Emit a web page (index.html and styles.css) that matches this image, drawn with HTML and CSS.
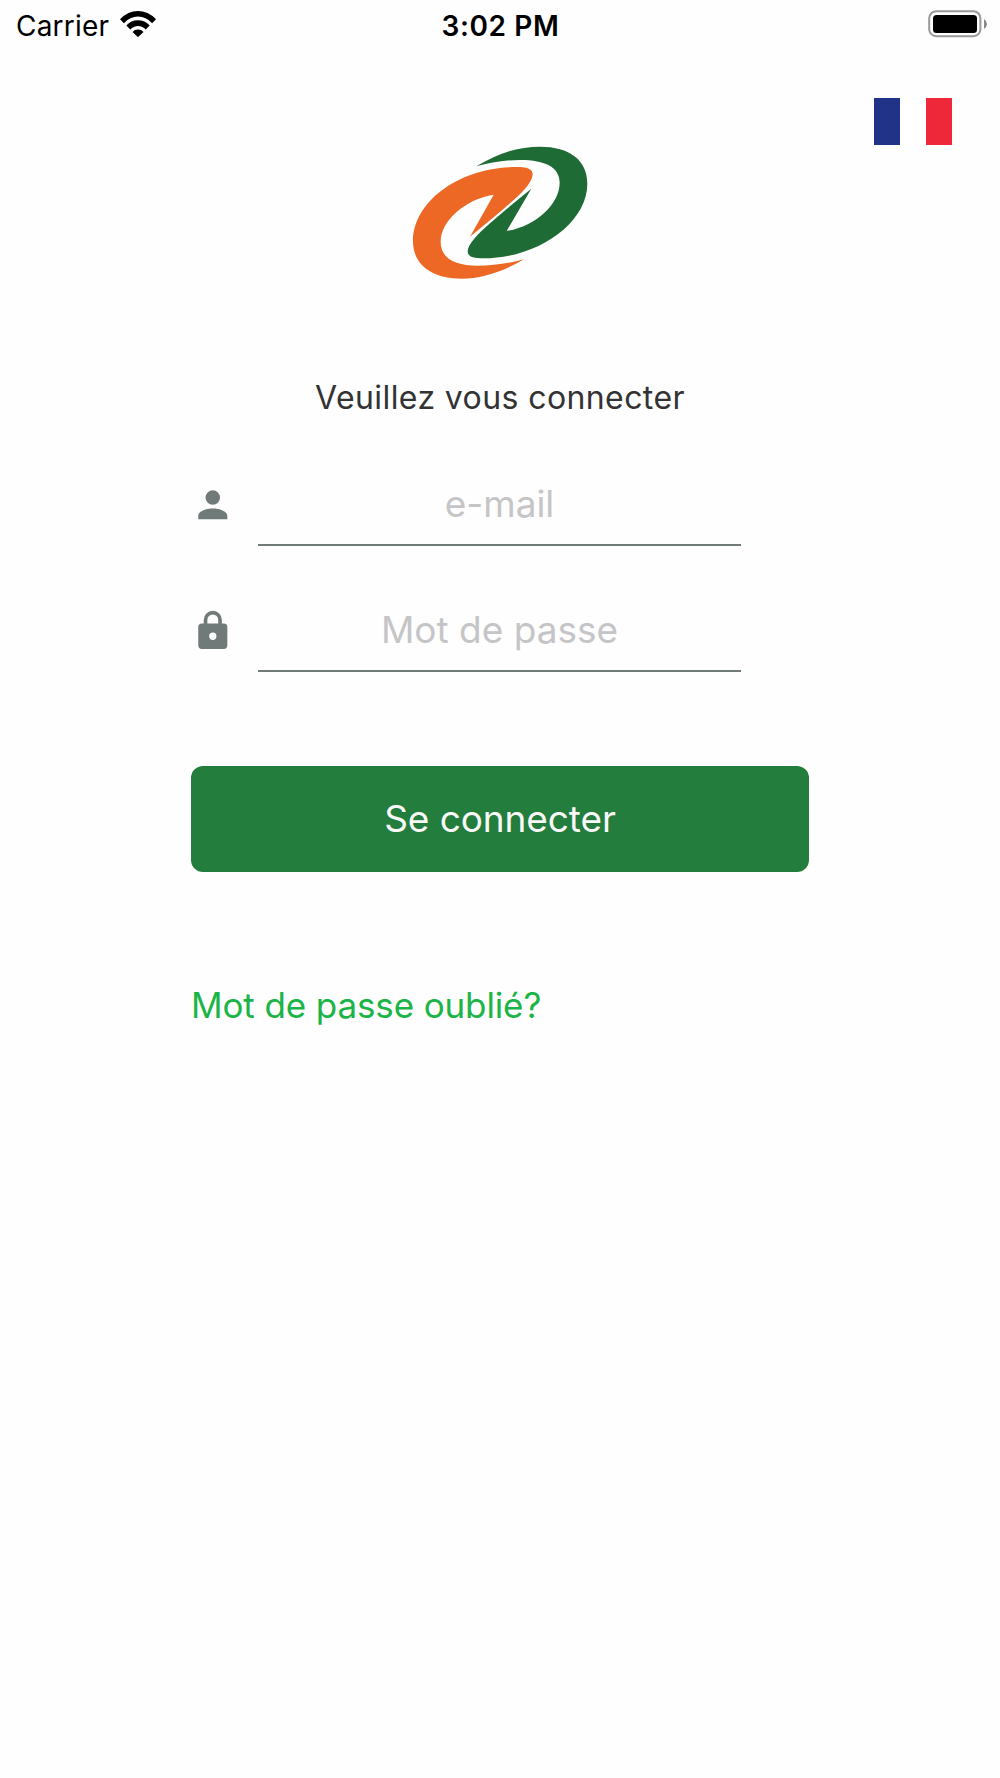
FILE: index.html
```html
<!DOCTYPE html>
<html lang="fr">
<head>
<meta charset="utf-8">
<title>Connexion</title>
<link rel="stylesheet" href="styles.css">
</head>
<body>
<div class="status-bar">
  <div class="carrier">
    <span class="carrier-name">Carrier</span>
    <svg class="wifi" width="38" height="28" viewBox="0 0 38 28">
      <path d="M1 10.2Q9 2 19 2t18 8.200l-3.900 4Q27 7.600 19 7.600T4.900 14.200z"/>
      <path d="M7.300 16.600Q12 11.300 19 11.300t11.700 5.300l-4 4Q23.600 17 19 17t-7.700 3.600z"/>
      <path d="M13.500 22.900Q15.500 20.500 19 20.500t5.500 2.400L19 28.200z"/>
    </svg>
  </div>
  <time class="clock">3:02 PM</time>
  <svg class="battery" width="60" height="28" viewBox="0 0 60 28">
    <rect x="1.200" y="1.200" width="51.200" height="25" rx="7" fill="#fff" stroke="#999" stroke-width="2"/>
    <rect x="5" y="5" width="44" height="18" rx="3.500"/>
    <path d="M56 9q3 2 3 5t-3 5z" fill="#888"/>
  </svg>
</div>
<div class="language">
  <svg class="flag" width="78" height="47" viewBox="0 0 78 47">
    <path d="M0 0h26v47H0z" fill="#203387"/>
    <path d="M26 0h26v47H26z" fill="#fff"/>
    <path d="M52 0h26v47H52z" fill="#ef2839"/>
  </svg>
</div>
<main class="login">
  <svg class="logo" width="200" height="160" viewBox="0 0 600 480">
    <path fill="#ec6824" d="M210 320L281 194C195 208 122 272 122 336C122 385 165 407 232 407C280 407 329 400 372 388C310 424 247 446 184 446C97 446 39 405 39 334C39 214 178 111 350 111C386 111 398 119 398 133C396 160 367 188 330 220Q280 264 210 320Z"/>
    <path fill="#1f6b36" d="M229 109C296 68 356 50 420 50C509 50 562 90 562 161C562 282 409 385 250 385C216 385 203 378 203 364C204 342 234 312 270 280Q310 244 394 176L320 303C409 288 479 221 479 158C479 112 436 90 361 90C312 90 270 98 229 109Z"/>
  </svg>
  <h1 class="title">Veuillez vous connecter</h1>
  <form class="form">
    <label class="field">
      <svg class="icon" viewBox="0 0 24 24"><path d="M12 4a4 4 0 1 1 0 8 4 4 0 0 1 0-8zM12 14c4.420 0 8 1.790 8 4v2H4v-2c0-2.210 3.580-4 8-4z"/></svg>
      <span class="input">e-mail</span>
    </label>
    <label class="field">
      <svg class="icon" viewBox="0 0 24 24"><path d="M12 17a2 2 0 1 0 0-4 2 2 0 0 0 0 4zM18 8a2 2 0 0 1 2 2v10a2 2 0 0 1-2 2H6a2 2 0 0 1-2-2V10a2 2 0 0 1 2-2h1V6a5 5 0 0 1 10 0v2zM12 3a3 3 0 0 0-3 3v2h6V6a3 3 0 0 0-3-3z"/></svg>
      <span class="input">Mot de passe</span>
    </label>
    <button class="submit" type="button">Se connecter</button>
  </form>
  <a class="forgot">Mot de passe oublié?</a>
</main>
</body>
</html>
```
FILE: styles.css
```css
* { box-sizing: border-box; }
body {
  margin: 0;
  min-height: 1778px;
  background: #fefefe;
  color: #333;
  font-family: Inter, "Liberation Sans", sans-serif;
}
svg { display: block; flex: none; }
.status-bar {
  display: grid;
  grid-template-columns: 1fr auto 1fr;
  align-items: start;
  height: 98px;
  padding: 9px 12px 0 16px;
  color: #000;
}
.carrier { display: flex; gap: 10px; }
.carrier-name, .clock { font-size: 28px; line-height: 34px; }
.carrier-name { letter-spacing: 0.2px; }
.clock { font-weight: 600; letter-spacing: 0.600px; padding-right: 3px; }
.battery { justify-self: end; margin-top: 1px; }
.language {
  display: flex;
  justify-content: flex-end;
  height: 32px;
  padding-right: 48px;
}
.login {
  display: flex;
  flex-direction: column;
  width: 618px;
  margin: 0 auto;
}
.logo { align-self: center; }
.title {
  margin: 88px 0 0;
  font-size: 32px;
  font-weight: 400;
  letter-spacing: 0.400px;
  line-height: 40px;
  text-align: center;
}
.form { display: flex; flex-direction: column; margin-top: 42px; }
.field { display: flex; height: 125.600px; gap: 23.400px; }
.icon { width: 43.600px; height: 43.600px; margin-top: 23px; fill: #707a79; }
.input {
  width: 483px;
  height: 86px;
  border-bottom: 2.500px solid #707a79;
  color: #c5c5c7;
  font-size: 37px;
  line-height: 87px;
  text-align: center;
}
.submit {
  height: 106px;
  margin-top: 55px;
  padding: 0 0 2px;
  border: 0;
  border-radius: 12px;
  background: #237d3c;
  color: #f8f8f8;
  font: inherit;
  font-size: 37px;
  letter-spacing: -0.100px;
}
.forgot {
  margin-top: 111px;
  color: #1bb446;
  font-size: 35px;
  letter-spacing: -0.120px;
  line-height: 44px;
}
```
